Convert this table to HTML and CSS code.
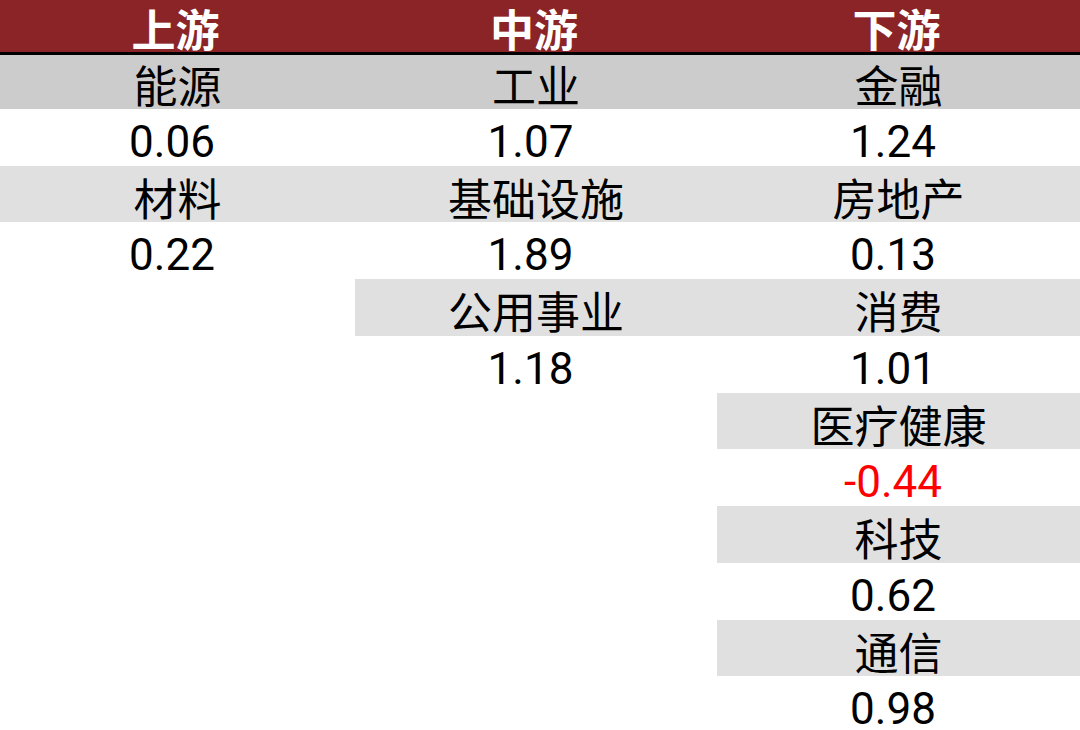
FILE: index.html
```html
<!DOCTYPE html>
<html lang="zh-CN">
<head>
<meta charset="utf-8">
<title>上游 中游 下游</title>
<link rel="stylesheet" href="styles.css">
</head>
<body>
<div class="board">
  <div class="head">
    <div class="head-cell">上游</div>
    <div class="head-cell">中游</div>
    <div class="head-cell">下游</div>
  </div>
  <div class="cols">
    <div class="col col-1">
      <div class="cell label first">能源</div>
      <div class="cell value">0.06</div>
      <div class="cell label">材料</div>
      <div class="cell value">0.22</div>
    </div>
    <div class="col col-2">
      <div class="cell label first">工业</div>
      <div class="cell value">1.07</div>
      <div class="cell label">基础设施</div>
      <div class="cell value">1.89</div>
      <div class="cell label">公用事业</div>
      <div class="cell value">1.18</div>
    </div>
    <div class="col col-3">
      <div class="cell label first">金融</div>
      <div class="cell value">1.24</div>
      <div class="cell label">房地产</div>
      <div class="cell value">0.13</div>
      <div class="cell label">消费</div>
      <div class="cell value">1.01</div>
      <div class="cell label">医疗健康</div>
      <div class="cell value neg">-0.44</div>
      <div class="cell label">科技</div>
      <div class="cell value">0.62</div>
      <div class="cell label">通信</div>
      <div class="cell value">0.98</div>
    </div>
  </div>
</div>
</body>
</html>
```

FILE: styles.css
```css
html, body {
  margin: 0;
  padding: 0;
  background: #ffffff;
}

body {
  width: 1080px;
  height: 730px;
  overflow: hidden;
  font-family: "Noto Sans CJK SC", "Noto Sans", sans-serif;
}

.board {
  width: 1080px;
}

.head {
  display: grid;
  grid-template-columns: 355px 362px 363px;
  height: 52px;
  background: #8a2426;
}

.head-cell {
  color: #ffffff;
  font-weight: 700;
  font-size: 44px;
  line-height: 56px;
  text-align: center;
  padding-right: 4px;
}

.cols {
  display: grid;
  grid-template-columns: 355px 362px 363px;
  align-items: start;
}

.col {
  display: flex;
  flex-direction: column;
}

.cell {
  height: 56.75px;
  box-sizing: border-box;
  text-align: center;
  color: #000000;
}

.label {
  background: #e0e0e0;
  font-family: "Noto Sans CJK SC", "Noto Sans", sans-serif;
  font-size: 44px;
  line-height: 62px;
}

.label.first {
  background: #cccccc;
  border-top: 3px solid #000000;
  line-height: 58px;
}

.value {
  font-family: Roboto, "Liberation Sans", sans-serif;
  font-size: 44px;
  line-height: 67px;
  padding-right: 11px;
}

.neg {
  color: #ff0000;
}
```
